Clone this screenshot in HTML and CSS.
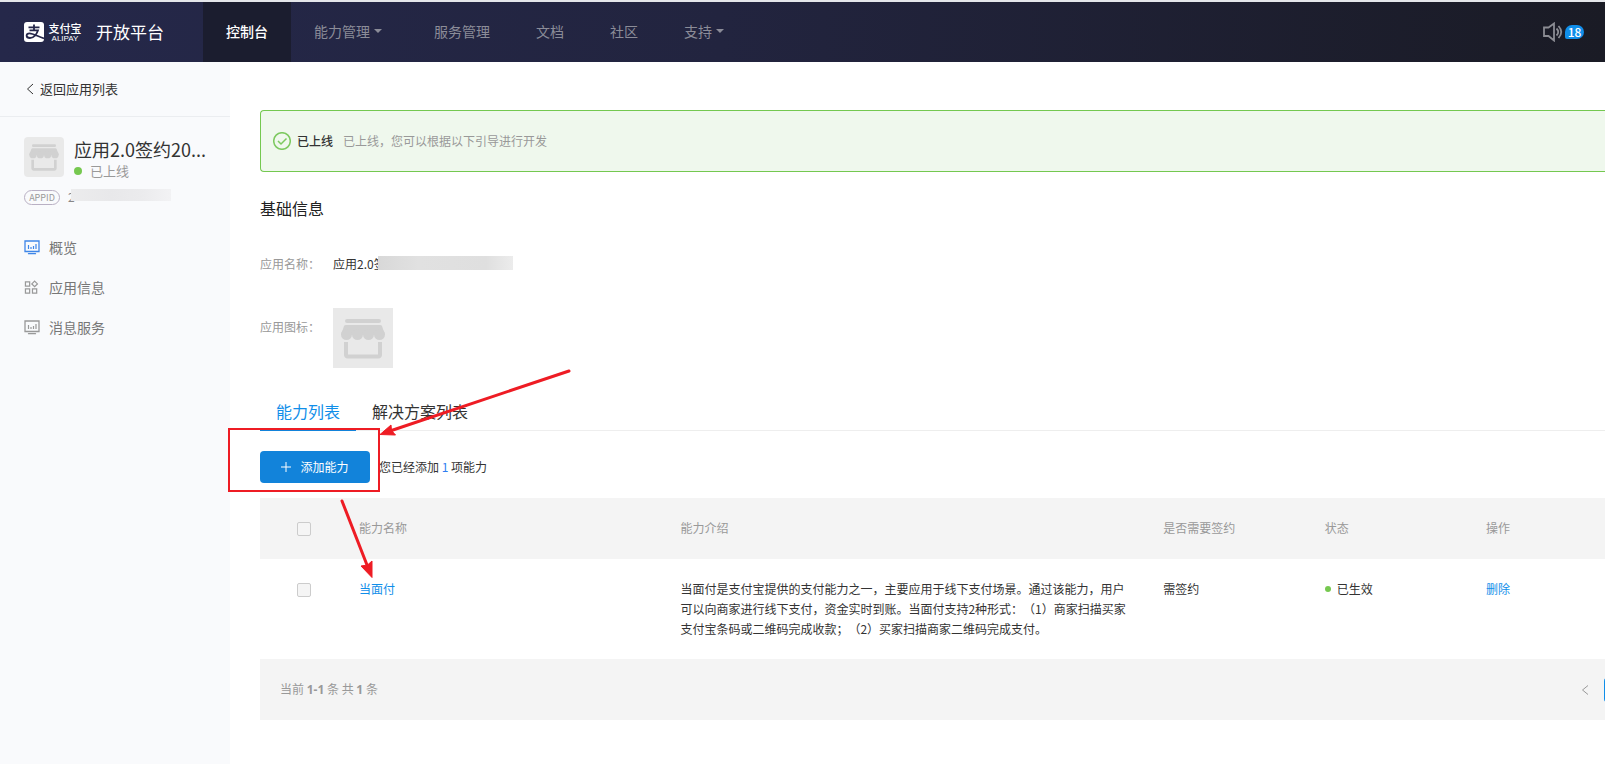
FILE: index.html
```html
<!DOCTYPE html>
<html lang="zh-CN">
<head>
<meta charset="utf-8">
<title>支付宝开放平台</title>
<link rel="stylesheet" href="styles.css">
</head>
<body>
<svg class="defs" aria-hidden="true">
  <symbol id="shop" viewBox="0 0 60 60">
    <g fill="#d1d1d1">
      <rect x="12" y="11" width="36" height="4" rx="2"/>
      <path d="M13 17h34q1.500 0 2 1L52 27H8l3-9q.5-1 2-1z"/>
      <circle cx="13.500" cy="26.500" r="5.500"/><circle cx="24.500" cy="26.500" r="5.500"/><circle cx="35.500" cy="26.500" r="5.500"/><circle cx="46.500" cy="26.500" r="5.500"/>
    </g>
    <path d="M13 34v13a1.500 1.500 0 0 0 1.500 1.500h31A1.500 1.500 0 0 0 47 47V34" fill="none" stroke="#d1d1d1" stroke-width="4"/>
  </symbol>
  <symbol id="monitor" viewBox="0 0 16 15">
    <path d="M1 1h14v10.500H1z" fill="none" stroke="currentColor" stroke-width="1.300"/>
    <path d="M4.500 5v4M7 7v2M9.500 6v3M12 4v5" fill="none" stroke="currentColor" stroke-width="1.200"/>
    <path d="M4.500 13.700h7" fill="none" stroke="currentColor" stroke-width="1.300" stroke-linecap="round"/>
  </symbol>
</svg>
<header class="topbar">
  <a class="brand" href="#">
    <svg class="brand-mark" viewBox="0 0 20 20" aria-hidden="true">
      <rect width="20" height="20" rx="3" fill="#fff"/>
      <path d="M4.500 5.300h11M10 2.500v6M5.500 8.300h8.500C13 12 9.500 16 6 16c-4.500 0-4.300-4.700-.5-4.700C9 11.300 13 14 20 16.500" fill="none" stroke="#25274a" stroke-width="1.800"/>
    </svg>
    <span class="brand-name"><span class="brand-cn">支付宝</span><span class="brand-en">ALIPAY</span></span>
    <span class="brand-title">开放平台</span>
  </a>
  <nav class="nav">
    <a class="nav-item active" href="#">控制台</a>
    <a class="nav-item has-menu" href="#">能力管理</a>
    <a class="nav-item" href="#">服务管理</a>
    <a class="nav-item" href="#">文档</a>
    <a class="nav-item" href="#">社区</a>
    <a class="nav-item has-menu" href="#">支持</a>
  </nav>
  <a class="notice" href="#" aria-label="18 条消息">
    <svg viewBox="0 0 20 20" aria-hidden="true"><path d="M1 5.500h4.500L11 1.500v17l-5.500-4.500H1zM13.500 6.500q3.500 3.500 0 7M15.500 4q5.500 6 0 12" fill="none" stroke="#8b8c93" stroke-width="1.800"/></svg>
    <span class="count">18</span>
  </a>
</header>
<div class="page">
  <aside class="sidebar">
    <a class="back" href="#"><svg viewBox="0 0 8 12" aria-hidden="true"><path d="M7 1L1.500 6L7 11" fill="none" stroke="currentColor"/></svg>返回应用列表</a>
    <section class="app">
      <div class="app-head">
        <svg class="app-icon"><use href="#shop"/></svg>
        <div class="app-text">
          <div class="app-name">应用2.0签约20...</div>
          <div class="app-state"><i class="dot"></i>已上线</div>
        </div>
      </div>
      <div class="app-id"><span class="id-tag">APPID</span><span class="masked">2<i class="mask mask-id"></i></span></div>
    </section>
    <nav class="menu">
      <a class="current" href="#"><svg><use href="#monitor"/></svg>概览</a>
      <a href="#"><svg viewBox="0 0 16 16"><path d="M1 2h4.500v4.500H1zM1 9.500h4.500V14H1zM8.500 9.500H13V14H8.500zM10.800 1.200l3 3l-3 3l-3-3z" fill="none" stroke="currentColor" stroke-width="1.300"/></svg>应用信息</a>
      <a href="#"><svg><use href="#monitor"/></svg>消息服务</a>
    </nav>
  </aside>
  <main class="main">
    <div class="alert">
      <svg viewBox="0 0 18 18" aria-hidden="true"><circle cx="9" cy="9" r="8.300"/><path d="M5 9l3 3l5.500-5.500"/></svg>
      <strong>已上线</strong><span>已上线，您可以根据以下引导进行开发</span>
    </div>
    <h2 class="heading">基础信息</h2>
    <dl class="info">
      <dt>应用名称：</dt><dd><span class="masked">应用2.0签<i class="mask mask-name"></i></span></dd>
      <dt>应用图标：</dt><dd><svg class="big-icon"><use href="#shop"/></svg></dd>
    </dl>
    <div class="tabs" role="tablist">
      <button class="tab selected" role="tab" aria-selected="true">能力列表</button>
      <button class="tab" role="tab" aria-selected="false">解决方案列表</button>
    </div>
    <div class="actions">
      <button class="add"><svg viewBox="0 0 10 10" aria-hidden="true"><path d="M5 0v10M0 5h10" stroke="#fff"/></svg>添加能力</button>
      <span>您已经添加 <b>1</b> 项能力</span>
    </div>
    <table class="table">
      <colgroup><col class="c-check"><col class="c-name"><col class="c-desc"><col class="c-small"><col class="c-small"><col></colgroup>
      <thead>
        <tr><th><input type="checkbox" aria-label="全选"></th><th>能力名称</th><th>能力介绍</th><th>是否需要签约</th><th>状态</th><th>操作</th></tr>
      </thead>
      <tbody>
        <tr>
          <td><input type="checkbox" aria-label="选择当面付"></td>
          <td><a href="#">当面付</a></td>
          <td>当面付是支付宝提供的支付能力之一，主要应用于线下支付场景。通过该能力，用户可以向商家进行线下支付，资金实时到账。当面付支持2种形式：（1）商家扫描买家支付宝条码或二维码完成收款；（2）买家扫描商家二维码完成支付。</td>
          <td>需签约</td>
          <td><i class="dot small"></i>已生效</td>
          <td><a href="#">删除</a></td>
        </tr>
      </tbody>
    </table>
    <div class="footer">
      <span>当前 <b>1-1</b> 条 共 <b>1</b> 条</span>
      <div class="pager">
        <button class="prev" aria-label="上一页"><svg viewBox="0 0 8 12"><path d="M7 1.500L1.500 6L7 10.500" fill="none" stroke="currentColor"/></svg></button>
        <button class="page-no" aria-label="第一页"></button>
      </div>
    </div>
  </main>
</div>
<svg class="marks" width="600" height="600" viewBox="0 0 600 600" aria-hidden="true">
  <rect x="229" y="429" width="150" height="62" fill="none" stroke="#ee1c24" stroke-width="2"/>
  <path d="M569 371L390 431M342 501L367 565" stroke="#ee1c24" stroke-width="3" stroke-linecap="round"/>
  <path d="M380 434.500L391 425l.5 5.500l4 4.500zM372 577.500L361 566l6.500-1l4.500-4z" fill="#ee1c24" stroke="#ee1c24"/>
</svg>
</body>
</html>
```
FILE: styles.css
```css
* { box-sizing: border-box; }
body {
  margin: 0;
  position: relative;
  min-height: 100vh;
  display: flex;
  flex-direction: column;
  border-top: 2px solid #e4e6ea;
  font: 12px/20px "Noto Sans CJK SC", "Noto Sans", sans-serif;
  text-spacing-trim: space-all;
  color: #333;
  background: #fff;
  overflow-x: hidden;
}
a { color: #108ee9; text-decoration: none; }
button { font: inherit; border: 0; background: none; padding: 0; cursor: pointer; }
svg { display: block; flex: none; }
.defs { position: absolute; width: 0; height: 0; }

.topbar {
  display: flex;
  height: 60px;
  background: linear-gradient(90deg, #25284a, #22243f 45%, #1a1b25);
}
.brand { width: 203px; padding-left: 24px; display: flex; align-items: center; color: #fff; }
.brand-mark { width: 20px; height: 20px; }
.brand-name { margin-left: 4px; width: 34px; display: flex; flex-direction: column; align-items: center; }
.brand-cn { font-size: 11px; line-height: 13px; font-weight: 500; white-space: nowrap; }
.brand-en { font: 8px/8px "Liberation Sans", sans-serif; }
.brand-title { margin-left: 14px; font-size: 17px; line-height: 24px; }
.nav { display: flex; }
.nav-item {
  display: flex;
  align-items: center;
  padding: 0 23px 2px;
  font-size: 14px;
  color: #8b8c98;
}
.nav-item.active { background: #1b1d2f; color: #fff; font-weight: 500; }
.has-menu::after {
  content: "";
  margin: 0 6px 0 4px;
  border: 4px solid transparent;
  border-top-color: #8b8c98;
  border-bottom: 0;
}
.notice { margin-left: auto; padding-right: 21px; display: flex; align-items: center; gap: 2px; }
.notice svg { width: 20px; height: 20px; }
.count {
  width: 19px;
  border-radius: 7px 7px 7px 2px;
  background: #108ee9;
  color: #fff;
  font-size: 12px;
  line-height: 14px;
  font-weight: 500;
  text-align: center;
}

.page { flex: 1; display: flex; }
.sidebar { width: 230px; flex: none; background: #f9fafc; }
.back {
  display: flex;
  align-items: center;
  gap: 6px;
  height: 55px;
  padding-left: 26px;
  border-bottom: 1px solid #ebedf0;
  font-size: 13px;
  color: #333;
}
.back svg { width: 8px; height: 12px; }
.app { padding: 20px 24px 0; }
.app-head { display: flex; gap: 10px; }
.app-icon { width: 40px; height: 40px; border-radius: 4px; background: #e9e9e9; }
.app-name { font-size: 18px; line-height: 24px; white-space: nowrap; }
.app-state { display: flex; align-items: center; gap: 8px; font-size: 13px; color: #999; }
.dot { width: 8px; height: 8px; border-radius: 50%; background: #76c850; }
.dot.small { display: inline-block; width: 6px; height: 6px; margin-right: 6px; vertical-align: 2px; }
.app-id { display: flex; align-items: center; gap: 8px; margin-top: 6px; color: #888; }
.id-tag {
  width: 36px;
  border: 1px solid #b9b0c4;
  border-radius: 8px;
  font-size: 9px;
  line-height: 13px;
  text-align: center;
  color: #999;
}
.masked { position: relative; }
.mask { position: absolute; }
.mask-id { left: 3px; top: 2px; width: 100px; height: 12px; background: linear-gradient(90deg, #ececed, #e8e8ea 40%, #ebebed 70%, #f2f2f4); }
.mask-name { left: 45px; top: 1px; width: 135px; height: 14px; background: linear-gradient(90deg, #d8d8d8, #e1e1e1 30%, #dfdfdf 80%, #ececec); }
.menu { margin-top: 20px; }
.menu a { display: flex; align-items: center; gap: 9px; height: 40px; padding-left: 24px; font-size: 14px; color: #777; }
.menu svg { width: 16px; height: 15px; color: #999; }
.menu .current svg { color: #3f86e8; }

.main { flex: 1; min-width: 0; padding: 48px 0 40px 30px; overflow: hidden; }
.alert {
  display: flex;
  align-items: center;
  height: 62px;
  padding-left: 12px;
  border: 1px solid #74c850;
  border-right: 0;
  border-radius: 4px 0 0 4px;
  background: #eff8ed;
  color: #999;
}
.alert svg { width: 18px; height: 18px; fill: none; stroke: #7cc95f; stroke-width: 1.500; }
.alert strong { margin: 0 10px 0 6px; font-weight: 500; color: #333; }
.heading { margin: 24px 0 0; font-size: 16px; line-height: 24px; font-weight: 400; color: #222; }
.info { display: grid; grid-template-columns: 73px 1fr; row-gap: 34px; margin: 34px 0 0; }
.info dt { color: #999; }
.info dd { margin: 0; }
.info dt:last-of-type { padding-top: 9px; }
.big-icon { width: 60px; height: 60px; background: #e9e9e9; }
.tabs { display: flex; margin-top: 25px; border-bottom: 1px solid #eee; }
.tab { margin-bottom: -1px; padding: 3px 16px; font-size: 16px; line-height: 30px; color: #333; border-bottom: 2px solid transparent; }
.tab.selected { color: #108ee9; border-color: #1283da; }
.actions { display: flex; align-items: center; gap: 9px; margin: 20px 0 15px; }
.actions b { font-weight: 400; color: #2f7df0; }
.add {
  width: 110px;
  height: 32px;
  display: flex;
  align-items: center;
  justify-content: center;
  gap: 9px;
  border-radius: 4px;
  background: #1283da;
  color: #fff;
}
.add svg { width: 10px; height: 10px; }
.table { width: 100%; table-layout: fixed; border-collapse: collapse; }
.c-check { width: 83px; }
.c-name { width: 23.9%; }
.c-desc { width: 35.9%; }
.c-small { width: 12%; }
th, td { padding: 20px 16px; text-align: left; vertical-align: top; font-weight: 400; }
th { height: 61px; background: #f4f4f4; color: #999; }
td { height: 100px; }
th:first-child, td:first-child { padding-left: 37px; }
input {
  appearance: none;
  display: block;
  width: 14px;
  height: 14px;
  margin: 4px 0 0;
  border: 1px solid #ccc;
  border-radius: 2px;
  background: #f5f5f5;
}
.footer {
  display: flex;
  align-items: center;
  justify-content: space-between;
  height: 61px;
  padding-left: 20px;
  background: #f4f4f4;
  color: #999;
}
.footer b { font-family: "Noto Sans", sans-serif; }
.pager { display: flex; align-items: center; margin-right: -23px; }
.prev { padding: 6px 15px 6px 8px; color: #999; }
.prev svg { width: 8px; height: 12px; }
.page-no { width: 24px; height: 24px; border-radius: 3px; background: #108ee9; }
.marks { position: absolute; left: 0; top: -2px; pointer-events: none; }
```
